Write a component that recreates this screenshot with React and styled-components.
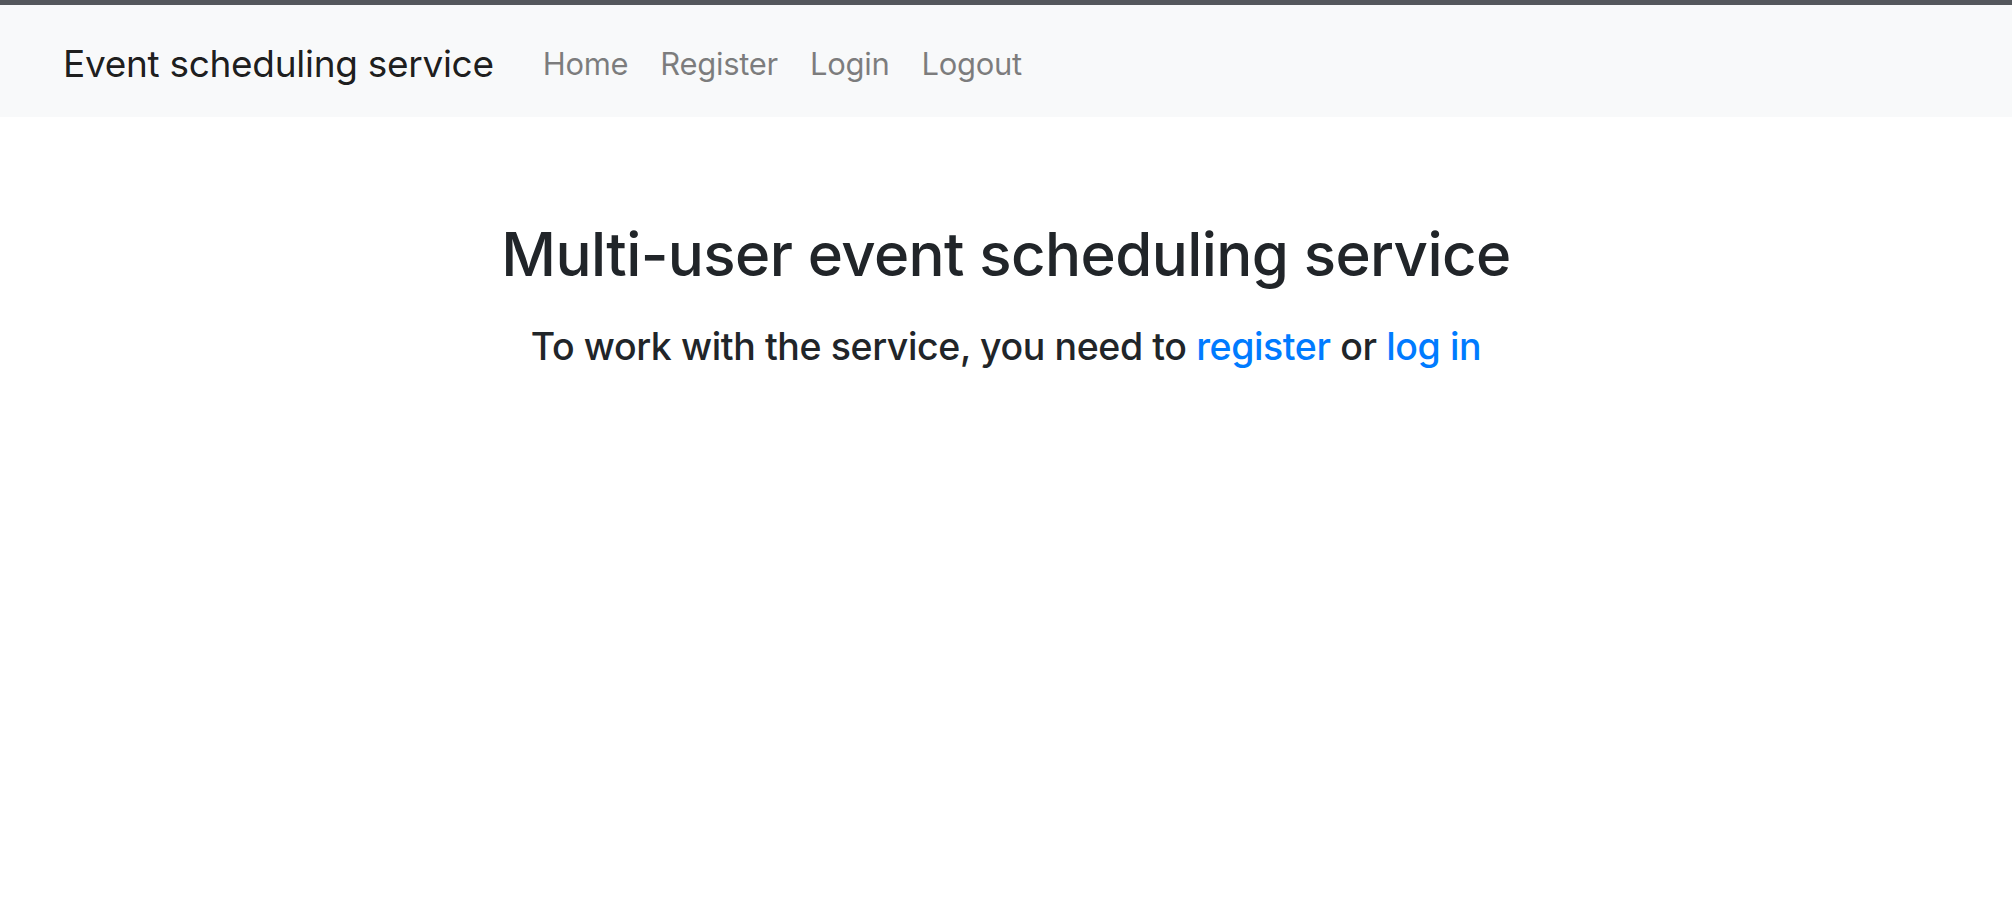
import React from "react";
import styled, { createGlobalStyle } from "styled-components";

const Global = createGlobalStyle`
  html, body { margin: 0; padding: 0; background: #fff; }
  body {
    font-family: Inter, "Noto Sans", "Liberation Sans", sans-serif;
    color: #212529;
    -webkit-font-smoothing: antialiased;
  }
  * { box-sizing: border-box; }
`;

const Page = styled.div`
  min-height: 922px;
  display: flex;
  flex-direction: column;
  border-top: 5px solid #54575c;
`;

const Navbar = styled.nav`
  height: 112px;
  background: #f8f9fa;
  display: flex;
  align-items: center;
  padding: 4px 0 0 63px;
`;

const Brand = styled.a`
  font-size: 37px;
  color: rgba(0, 0, 0, 0.9);
  text-decoration: none;
  margin-right: 33px;
  letter-spacing: -0.3px;
`;

const NavList = styled.ul`
  display: flex;
  list-style: none;
  margin: 0;
  padding: 0;
`;

const NavLink = styled.a`
  display: block;
  padding: 16px 16px;
  font-size: 31px;
  color: rgba(0, 0, 0, 0.5);
  text-decoration: none;
  letter-spacing: -0.3px;
`;

const Main = styled.main`
  display: flex;
  flex-direction: column;
  align-items: center;
  padding-top: 101px;
`;

const Title = styled.h2`
  margin: 0;
  font-size: 60px;
  font-weight: 500;
  line-height: 1.2;
  letter-spacing: -0.6px;
  color: #212529;
`;

const Subtitle = styled.h5`
  margin: 34px 0 0;
  font-size: 37.5px;
  font-weight: 500;
  line-height: 1.2;
  letter-spacing: -0.4px;
  color: #212529;
`;

const Link = styled.a`
  color: #007bff;
  text-decoration: none;
`;

export default function App() {
  return (
    <>
      <Global />
      <Page>
        <Navbar>
          <Brand href="#">Event scheduling service</Brand>
          <NavList>
            {["Home", "Register", "Login", "Logout"].map((l) => (
              <li key={l}>
                <NavLink href="#">{l}</NavLink>
              </li>
            ))}
          </NavList>
        </Navbar>
        <Main>
          <Title>Multi-user event scheduling service</Title>
          <Subtitle>
            To work with the service, you need to <Link href="#">register</Link> or{" "}
            <Link href="#">log in</Link>
          </Subtitle>
        </Main>
      </Page>
    </>
  );
}
